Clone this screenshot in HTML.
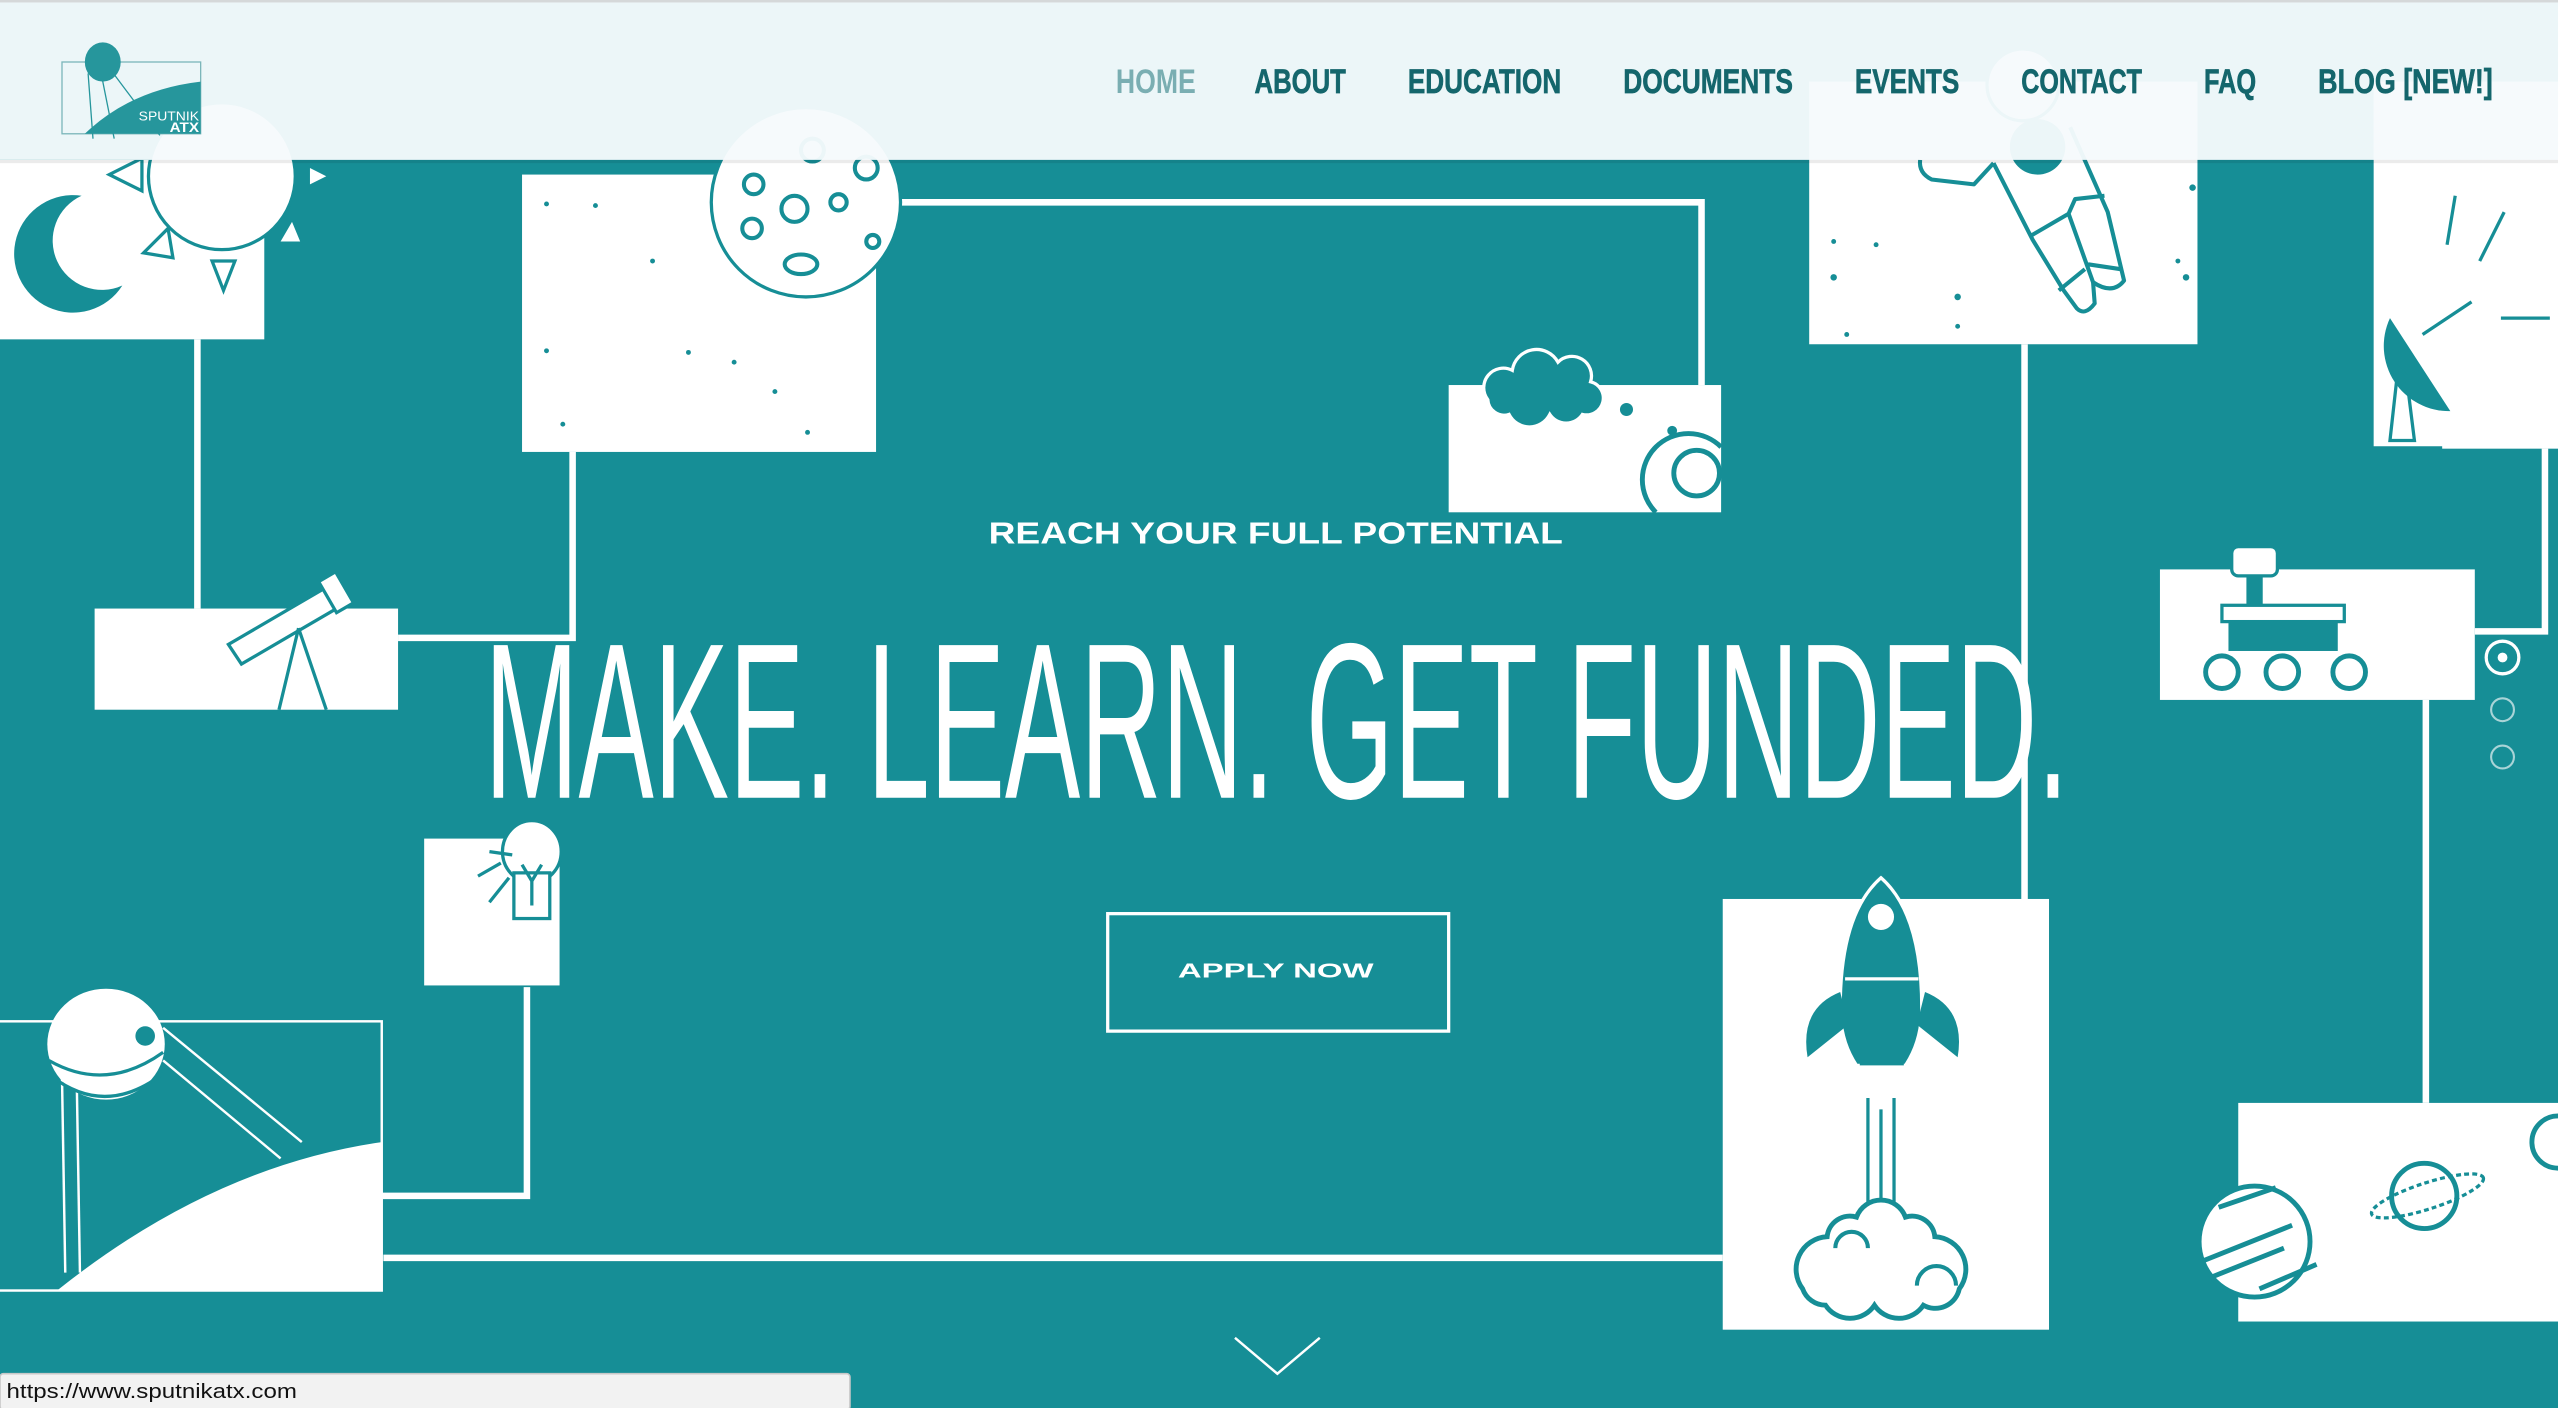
<!DOCTYPE html>
<html><head><meta charset="utf-8"><style>
html,body{margin:0;padding:0;width:2558px;height:1408px;overflow:hidden;background:#168e96}
svg{display:block}
text{font-family:"Liberation Sans",sans-serif}
</style></head><body>
<svg width="2558" height="1408" viewBox="0 0 1568 863" preserveAspectRatio="none" xmlns="http://www.w3.org/2000/svg">
<rect width="1568" height="863" fill="#168e96"/>
<g fill="none" stroke="#fff" stroke-width="4">
<path d="M121 208V373"/>
<path d="M244 391H351V277"/>
<path d="M552 124H1043V236"/>
<path d="M1241 211V551"/>
<path d="M235 771H1056"/>
<path d="M234 733H323V605"/>
<path d="M1560 275V387H1517"/>
<path d="M1487 429V676"/>
</g>
<g fill="#fff">
<rect x="0" y="98" width="162" height="110"/>
<rect x="58" y="373" width="186" height="62"/>
<rect x="320" y="107" width="217" height="170"/>
<rect x="888" y="236" width="167" height="78"/>
<rect x="1109" y="50" width="238" height="161"/>
<rect x="1056" y="551" width="200" height="264"/>
<rect x="260" y="514" width="83" height="90"/>
<rect x="1455" y="50" width="113" height="225"/>
<rect x="1324" y="349" width="193" height="80"/>
<rect x="1372" y="676" width="196" height="134"/>
</g>
<rect x="-2" y="626" width="236" height="165" fill="none" stroke="#fff" stroke-width="1.5"/>
<path d="M35 791Q130 715 234 700V791Z" fill="#fff"/>
<g stroke="#fff" stroke-width="1.5"><line x1="38" y1="660" x2="40" y2="780"/><line x1="47" y1="660" x2="49" y2="780"/><line x1="100" y1="630" x2="185" y2="700"/><line x1="100" y1="650" x2="172" y2="710"/></g>
<ellipse cx="65" cy="640" rx="36" ry="34" fill="#fff"/>
<path d="M30 650Q65 670 100 645M32 660Q65 685 100 658" fill="none" stroke="#168e96" stroke-width="2"/>
<circle cx="89" cy="635" r="6" fill="#168e96"/>
<circle cx="136" cy="108" r="45" fill="#fff" stroke="#168e96" stroke-width="2"/>
<path d="M50 120A36 36 0 1 0 75 175A30 30 0 1 1 50 120Z" fill="#168e96"/>
<path d="M88 155l15 -15l3 18z M130 160l14 0l-7 18z M67 107l20 -10v20z" fill="none" stroke="#168e96" stroke-width="2"/>
<path d="M190 103l10 5l-10 5z M172 148l12 0l-5 -12z" fill="#fff"/>
<circle cx="494" cy="124" r="58" fill="#fff" stroke="#168e96" stroke-width="2"/>
<g fill="none" stroke="#168e96" stroke-width="2.5"><circle cx="462" cy="113" r="6"/><circle cx="487" cy="128" r="8"/><circle cx="514" cy="124" r="5"/><circle cx="531" cy="103" r="7"/><circle cx="461" cy="140" r="6"/><ellipse cx="491" cy="162" rx="10" ry="6"/><circle cx="498" cy="92" r="7"/><circle cx="535" cy="148" r="4"/></g>
<g fill="#168e96"><circle cx="335" cy="125" r="1.5"/><circle cx="365" cy="126" r="1.5"/><circle cx="335" cy="215" r="1.5"/><circle cx="422" cy="216" r="1.5"/><circle cx="450" cy="222" r="1.5"/><circle cx="475" cy="240" r="1.5"/><circle cx="345" cy="260" r="1.5"/><circle cx="495" cy="265" r="1.5"/><circle cx="400" cy="160" r="1.5"/></g>
<path d="M912 245a12 12 0 0 1 15-18a15 15 0 0 1 28-5a12 12 0 0 1 20 12a10 10 0 0 1-5 20a12 12 0 0 1-20 0a14 14 0 0 1-25 0a10 10 0 0 1-13-9z" fill="#168e96" stroke="#fff" stroke-width="2"/>
<circle cx="997" cy="251" r="4" fill="#168e96"/><circle cx="1025" cy="264" r="3" fill="#168e96"/>
<path d="M1015 314a25 25 0 0 1 40-40" fill="none" stroke="#168e96" stroke-width="3"/>
<circle cx="1040" cy="290" r="14" fill="none" stroke="#168e96" stroke-width="3"/>
<g fill="#fff" stroke="#168e96" stroke-width="2"><path d="M140 395l60-35l8 12l-60 35z"/><rect x="200" y="352" width="12" height="22" transform="rotate(-30 206 363)"/></g>
<path d="M183 385l-12 50M183 385l17 50" fill="none" stroke="#168e96" stroke-width="2"/>
<ellipse cx="326" cy="522" rx="18" ry="19" fill="#fff" stroke="#168e96" stroke-width="2"/>
<rect x="315" y="535" width="22" height="28" fill="#fff" stroke="#168e96" stroke-width="2"/>
<path d="M320 530l6 10l6-10M326 540v15M300 522l14 2M293 537l14-8M300 553l12-15" fill="none" stroke="#168e96" stroke-width="2"/>
<!-- astronaut -->
<g fill="none" stroke="#168e96" stroke-width="2.5" stroke-linejoin="round">
<path d="M1222 100L1246 147L1265 178L1273 189Q1278 194 1284 186L1283 173Q1295 181 1302 172L1292 130L1269 78"/>
<path d="M1222 100L1210 113L1184 110Q1176 106 1177 98"/>
<path d="M1244 145L1268 131L1283 173M1268 131L1272 122L1290 120M1262 178L1278 165M1280 162L1300 165"/>
</g>
<circle cx="1249" cy="90" r="17" fill="#168e96"/>
<circle cx="1240" cy="52" r="22" fill="#fff" stroke="#168e96" stroke-width="2"/>
<g fill="#168e96"><circle cx="1124" cy="148" r="1.5"/><circle cx="1150" cy="150" r="1.5"/><circle cx="1335" cy="160" r="1.5"/><circle cx="1132" cy="205" r="1.5"/><circle cx="1200" cy="200" r="1.5"/><circle cx="1200" cy="182" r="2"/><circle cx="1344" cy="115" r="2"/><circle cx="1340" cy="170" r="2"/><circle cx="1124" cy="170" r="2"/></g>
<path d="M1465 195A40 40 0 0 0 1502 252Z" fill="#168e96"/>
<path d="M1470 225l-5 45h15l-5-40z" fill="none" stroke="#168e96" stroke-width="2"/>
<path d="M1442 275h55" stroke="#168e96" stroke-width="3"/>
<path d="M1485 205l30-20M1500 150l5-30M1520 160l15-30M1533 195h30" stroke="#168e96" stroke-width="2"/>
<rect x="1368" y="335" width="28" height="18" rx="4" fill="#fff" stroke="#168e96" stroke-width="2"/>
<rect x="1377" y="353" width="10" height="18" fill="#168e96"/>
<rect x="1362" y="371" width="75" height="10" fill="#fff" stroke="#168e96" stroke-width="2"/>
<rect x="1366" y="381" width="67" height="18" fill="#168e96"/>
<g fill="#fff" stroke="#168e96" stroke-width="3"><circle cx="1362" cy="412" r="10"/><circle cx="1399" cy="412" r="10"/><circle cx="1440" cy="412" r="10"/></g>
<path d="M1153 538q-25 22-25 80q0 20 10 35h30q10-15 10-35q0-58-25-80z" fill="#168e96" stroke="#fff" stroke-width="2"/>
<circle cx="1153" cy="562" r="8" fill="#fff"/>
<path d="M1131 600h45" stroke="#fff" stroke-width="2"/>
<path d="M1128 608q-25 10-20 40l25-20z M1180 608q25 10 20 40l-25-20z" fill="#168e96"/>
<rect x="1140" y="640" width="27" height="13" fill="#168e96"/>
<path d="M1145 673v70M1153 680v63M1161 673v70" stroke="#168e96" stroke-width="2"/>
<path d="M1105 790a20 20 0 0 1 15-32a14 14 0 0 1 18-12a16 16 0 0 1 30 0a14 14 0 0 1 18 12a20 20 0 0 1 15 32a15 15 0 0 1-22 10a18 18 0 0 1-30 0a18 18 0 0 1-30 0a15 15 0 0 1-14-10z" fill="#fff" stroke="#168e96" stroke-width="3"/>
<path d="M1125 765a10 10 0 0 1 20 0M1175 788a12 12 0 0 1 24 0" fill="none" stroke="#168e96" stroke-width="2.5"/>
<circle cx="1382" cy="761" r="34" fill="#fff" stroke="#168e96" stroke-width="3"/>
<path d="M1360 740l35-12M1350 773l55-22M1355 783l45-18M1385 790l35-15" stroke="#168e96" stroke-width="3"/>
<circle cx="1486" cy="733" r="20" fill="none" stroke="#168e96" stroke-width="3"/>
<ellipse cx="1488" cy="733" rx="36" ry="8" transform="rotate(-18 1488 733)" fill="none" stroke="#168e96" stroke-width="2" stroke-dasharray="3 2"/>
<circle cx="1568" cy="700" r="16" fill="#fff" stroke="#168e96" stroke-width="3"/>
<circle cx="1534" cy="403" r="10" fill="none" stroke="#fff" stroke-width="2"/><circle cx="1534" cy="403" r="3" fill="#fff"/>
<circle cx="1534" cy="435" r="7" fill="none" stroke="#a9d4d7" stroke-width="1.3"/>
<circle cx="1534" cy="464" r="7" fill="none" stroke="#a9d4d7" stroke-width="1.3"/>
<path d="M757 820l26 22l26-22" fill="none" stroke="#fff" stroke-width="1.5"/>
<text x="606" y="333" font-size="19" font-weight="bold" fill="#fff" textLength="352" lengthAdjust="spacingAndGlyphs">REACH YOUR FULL POTENTIAL</text>
<text x="297" y="489" font-size="136" fill="#fff" textLength="971" lengthAdjust="spacingAndGlyphs">MAKE. LEARN. GET FUNDED.</text>
<rect x="679" y="560" width="209" height="72" fill="none" stroke="#fff" stroke-width="2"/>
<text x="722" y="599" font-size="12.5" font-weight="bold" fill="#fff" textLength="120" lengthAdjust="spacingAndGlyphs">APPLY NOW</text>
<rect x="0" y="0" width="1568" height="98" fill="#f6fafc" fill-opacity="0.96"/>
<rect x="0" y="98" width="1568" height="2" fill="#000" fill-opacity="0.08"/>
<rect x="0" y="0" width="1568" height="1.5" fill="#d5d8d9"/>
<rect x="38" y="38" width="85" height="44" fill="none" stroke="#7bb6ba" stroke-width="0.8"/>
<path d="M52 82Q80 55 123 50V82Z" fill="#26969c"/>
<ellipse cx="63" cy="38" rx="11" ry="12" fill="#26969c"/>
<path d="M62 45l8 40M68 43l30 40M54 45l3 40" stroke="#26969c" stroke-width="0.8" fill="none"/>
<text x="85" y="74" font-size="8" fill="#fff" textLength="37" lengthAdjust="spacingAndGlyphs">SPUTNIK</text>
<text x="104" y="81" font-size="8.5" font-weight="bold" fill="#fff" textLength="18" lengthAdjust="spacingAndGlyphs">ATX</text>
<g font-size="21" font-weight="bold" fill="#14666c" stroke="#14666c" stroke-width="0.4">
<text x="684" y="57" fill="#7aaeb2" stroke="none" textLength="49" lengthAdjust="spacingAndGlyphs">HOME</text>
<text x="769" y="57" textLength="56" lengthAdjust="spacingAndGlyphs">ABOUT</text>
<text x="863" y="57" textLength="94" lengthAdjust="spacingAndGlyphs">EDUCATION</text>
<text x="995" y="57" textLength="104" lengthAdjust="spacingAndGlyphs">DOCUMENTS</text>
<text x="1137" y="57" textLength="64" lengthAdjust="spacingAndGlyphs">EVENTS</text>
<text x="1239" y="57" textLength="74" lengthAdjust="spacingAndGlyphs">CONTACT</text>
<text x="1351" y="57" textLength="32" lengthAdjust="spacingAndGlyphs">FAQ</text>
<text x="1421" y="57" textLength="107" lengthAdjust="spacingAndGlyphs">BLOG [NEW!]</text>
</g>
<rect x="0" y="842" width="521" height="22" rx="2" fill="#f2f2f2" stroke="#c8c8c8" stroke-width="1"/>
<text x="4" y="857" font-size="12.5" fill="#111" textLength="178" lengthAdjust="spacingAndGlyphs">https://www.sputnikatx.com</text>
</svg>
</body></html>
